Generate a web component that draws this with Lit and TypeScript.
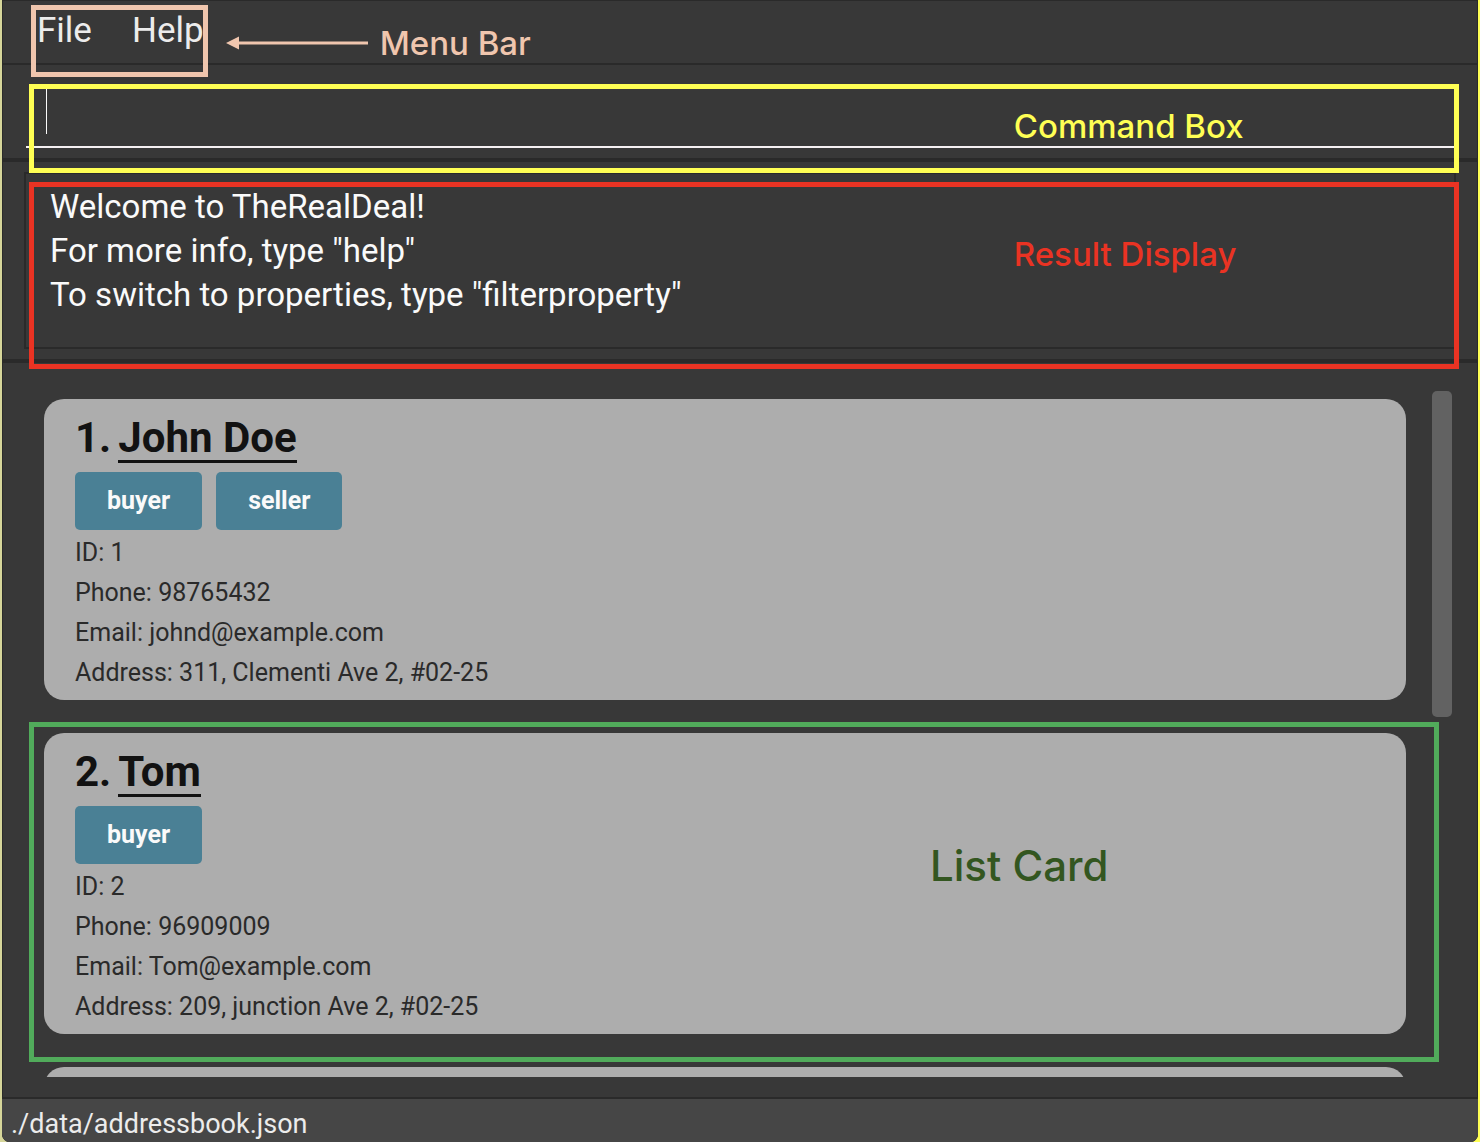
import { LitElement, html, css } from "lit";
import { customElement, property, state } from "lit/decorators.js";

interface Person {
  id: number;
  name: string;
  tags: string[];
  phone: string;
  email: string;
  address: string;
}

const PEOPLE: Person[] = [
  {
    id: 1,
    name: "John Doe",
    tags: ["buyer", "seller"],
    phone: "98765432",
    email: "johnd@example.com",
    address: "311, Clementi Ave 2, #02-25",
  },
  {
    id: 2,
    name: "Tom",
    tags: ["buyer"],
    phone: "96909009",
    email: "Tom@example.com",
    address: "209, junction Ave 2, #02-25",
  },
];

/** Coloured outline with a caption, laid over the part of the window it names. */
@customElement("callout-box")
export class CalloutBox extends LitElement {
  @property() label = "";

  static styles = css`
    :host {
      display: flex;
      align-items: center;
      box-sizing: border-box;
      border: 5px solid currentColor;
      pointer-events: none;
      font-family: Inter, "Liberation Sans", sans-serif;
      font-weight: 500;
      font-size: 33px;
      line-height: 40px;
    }
    .label {
      margin-left: var(--label-start, 69%);
      white-space: nowrap;
      color: var(--label-color, currentColor);
    }
  `;

  render() {
    return html`<span class="label">${this.label}</span>`;
  }
}

@customElement("person-card")
export class PersonCard extends LitElement {
  @property({ attribute: false }) person!: Person;

  static styles = css`
    :host {
      display: block;
      box-sizing: border-box;
      min-height: 301px;
      padding: 8px 31px 7px;
      border-radius: 20px;
      background: #adadad;
      color: #2a2a2a;
      font-size: 25px;
      line-height: 40px;
    }
    .title {
      display: flex;
      gap: 7px;
      margin: 0;
      height: 65px;
      font-size: 42px;
      line-height: 62px;
      font-weight: 700;
      color: #121212;
    }
    .name {
      box-sizing: border-box;
      height: 56px;
      border-bottom: 3px solid #121212;
    }
    .tags {
      display: flex;
      gap: 14px;
      margin: 0 0 3px;
      padding: 0;
      list-style: none;
    }
    .tag {
      padding: 0 32px;
      border-radius: 5px;
      background: #4a8095;
      color: #fafafa;
      font-weight: 700;
      line-height: 58px;
    }
    .line {
      margin: 0;
    }
  `;

  render() {
    const p = this.person;
    return html`
      <h2 class="title"><span>${p.id}.</span><span class="name">${p.name}</span></h2>
      <ul class="tags">
        ${p.tags.map((t) => html`<li class="tag">${t}</li>`)}
      </ul>
      <p class="line">ID: ${p.id}</p>
      <p class="line">Phone: ${p.phone}</p>
      <p class="line">Email: ${p.email}</p>
      <p class="line">Address: ${p.address}</p>
    `;
  }
}

@customElement("app-root")
export class AppRoot extends LitElement {
  @state() private people = PEOPLE;

  static styles = css`
    :host {
      display: block;
      box-sizing: border-box;
      height: 100vh;
      padding: 0 2px;
      background: linear-gradient(90deg, #d6d69a 50%, #ffff54 50%);
      font-family: Roboto, "Liberation Sans", sans-serif;
      color: #fafafa;
    }
    .window {
      display: flex;
      flex-direction: column;
      box-sizing: border-box;
      height: 100%;
      border-top: 1px solid #2a2a2a;
      border-radius: 0 0 8px 8px;
      background: #383838;
      box-shadow: inset 1px 0 #2a2a2a, inset -1px 0 #2a2a2a;
      overflow: hidden;
    }
    .menubar {
      display: flex;
      align-items: flex-start;
      padding: 4px 29px 0;
      height: 58px;
      border-bottom: 2px solid #2a2a2a;
    }
    .menus {
      position: relative;
      display: flex;
      gap: 40px;
      padding: 4px 4px 0 6px;
    }
    .menu {
      padding: 0;
      border: 0;
      background: none;
      color: #ececec;
      font: inherit;
      font-size: 35px;
      line-height: 44px;
    }
    .menu-outline {
      position: absolute;
      inset: 0 0 -24px 0;
      border: 5px solid #f0c6ae;
      pointer-events: none;
    }
    .menu-note {
      display: flex;
      align-items: center;
      gap: 12px;
      padding: 18px 0 0 18px;
      color: #f0c6ae;
      font-family: Inter, "Liberation Sans", sans-serif;
      font-weight: 500;
      font-size: 33px;
      line-height: 40px;
    }
    .arrow {
      width: 142px;
      height: 14px;
    }
    .command {
      position: relative;
      z-index: 1;
      padding: 10px 23px 10px 24px;
      border-bottom: 4px solid #2a2a2a;
    }
    .command-field {
      display: block;
      box-sizing: border-box;
      width: 100%;
      height: 73px;
      padding: 0 20px;
      border: 0;
      border-bottom: 2px solid #f4f0f2;
      outline: 0;
      background: transparent;
      color: inherit;
      font: inherit;
      font-size: 33px;
      caret-color: transparent;
    }
    .caret {
      position: absolute;
      left: 44px;
      top: 24px;
      width: 1px;
      height: 45px;
      background: #fafafa;
    }
    .command-note {
      position: absolute;
      inset: 19px 19px -15px 27px;
      padding-bottom: 6px;
      color: #ffff54;
    }
    .result {
      padding: 10px 22px;
      border-bottom: 4px solid #2a2a2a;
    }
    .result-frame {
      position: relative;
      padding: 11px 24px 30px;
      border: 2px solid #2a2a2a;
    }
    .result-text {
      display: block;
      font-size: 33px;
      line-height: 44px;
      white-space: pre-line;
    }
    .result-note {
      position: absolute;
      inset: 8px -5px -22px 3px;
      padding-bottom: 44px;
      color: #ea3323;
    }
    .list-panel {
      display: flex;
      flex: 1;
      min-height: 0;
      padding: 28px 22px 20px;
      border-bottom: 2px solid #2a2a2a;
    }
    .viewport {
      position: relative;
      flex: 1;
      overflow: hidden;
    }
    .cards {
      display: flex;
      flex-direction: column;
      gap: 33px;
      margin: 0;
      padding: 8px 50px 0 20px;
      list-style: none;
    }
    .item {
      position: relative;
    }
    .blank {
      height: 301px;
      border-radius: 20px;
      background: #adadad;
    }
    .card-note {
      position: absolute;
      inset: -11px -33px -28px -15px;
      padding-bottom: 52px;
      color: #51ab5b;
      font-size: 42px;
      --label-start: 64%;
      --label-color: #335620;
    }
    .thumb {
      position: absolute;
      top: 0;
      right: 4px;
      width: 20px;
      height: 326px;
      border-radius: 5px;
      background: #626262;
    }
    .status {
      padding: 7px 9px 0;
      background: #464646;
      color: #ececec;
      font-size: 27px;
      line-height: 36px;
    }
  `;

  render() {
    return html`
      <main class="window">
        <header class="menubar">
          <nav class="menus" aria-label="Menu">
            <button class="menu" type="button">File</button>
            <button class="menu" type="button">Help</button>
            <span class="menu-outline"></span>
          </nav>
          <div class="menu-note">
            <svg class="arrow" viewBox="0 0 142 14" aria-hidden="true">
              <path d="M0 7 13 .5v13z" fill="currentColor" />
              <path d="M12 7h130" stroke="currentColor" stroke-width="3" />
            </svg>
            <span>Menu Bar</span>
          </div>
        </header>

        <section class="command">
          <input class="command-field" type="text" aria-label="Command" />
          <span class="caret"></span>
          <callout-box class="command-note" label="Command Box"></callout-box>
        </section>

        <section class="result">
          <div class="result-frame">
            <output class="result-text"
              >${'Welcome to TheRealDeal!\nFor more info, type "help"\nTo switch to properties, type "filterproperty"'}</output
            >
            <callout-box class="result-note" label="Result Display"></callout-box>
          </div>
        </section>

        <section class="list-panel">
          <div class="viewport">
            <ul class="cards">
              ${this.people.map(
                (p) => html`<li class="item">
                  <person-card .person=${p}></person-card>
                  ${p.id === 2
                    ? html`<callout-box class="card-note" label="List Card"></callout-box>`
                    : null}
                </li>`
              )}
              <li class="blank"></li>
            </ul>
            <span class="thumb"></span>
          </div>
        </section>

        <footer class="status">./data/addressbook.json</footer>
      </main>
    `;
  }
}
